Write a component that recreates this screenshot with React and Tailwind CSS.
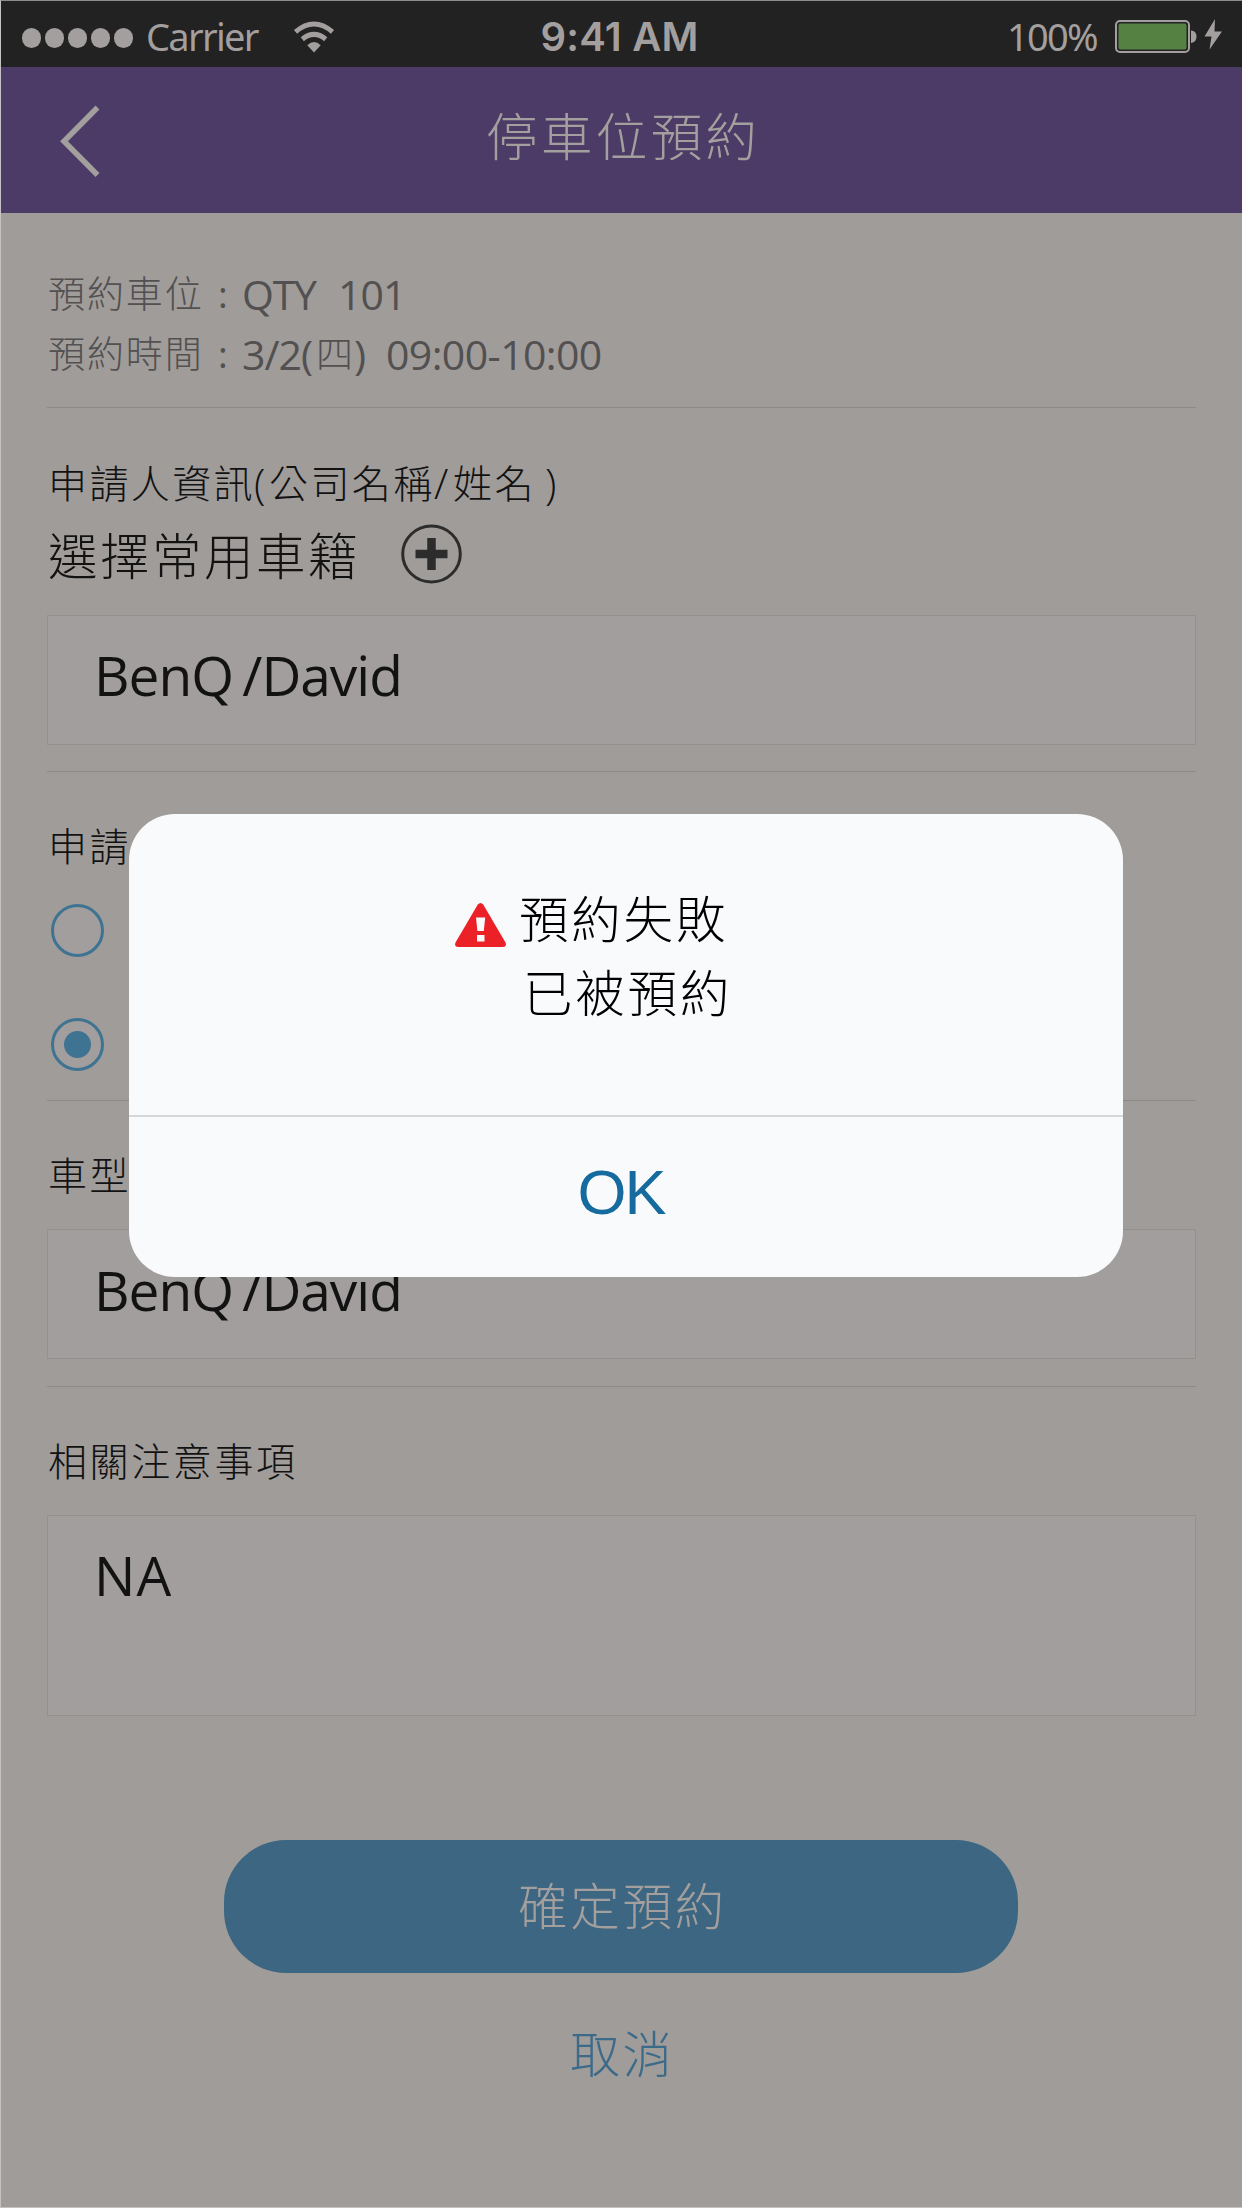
import React from "react";

const zh = "font-['Open_Sans','Noto_Sans_CJK_TC',sans-serif] font-light";

function StatusBar() {
  return (
    <div className="relative flex h-[66px] items-center bg-[#222222] text-[#a39f9e]">
      <div className="ml-[21px] mt-[7px] flex gap-[4px]">
        {[0, 1, 2, 3, 4].map((i) => (
          <span key={i} className="h-[20px] w-[19px] rounded-full bg-[#a39f9e]" />
        ))}
      </div>
      <span className="ml-[13px] mt-[3px] w-[112px] whitespace-nowrap font-['Noto_Sans',sans-serif] text-[38px] leading-[60px] tracking-[-1.700px]">Carrier</span>
      <svg className="ml-[35px] mt-[5px] h-[32px] w-[42px]" viewBox="0 0 42 32" fill="none" stroke="#a39f9e" strokeWidth="5">
        <path d="M2.5 10.8Q21 -4.8 39.5 10.8" />
        <path d="M9.3 18.2Q21 8.6 32.7 18.2" />
        <path d="M14.3 24.2Q21 18 27.7 24.2L21 31.5Z" fill="#a39f9e" stroke="none" />
      </svg>
      <div className="absolute inset-x-0 top-[6px] pr-[4px] text-center font-['Inter',sans-serif] text-[40px] font-semibold leading-[60px] tracking-[0.200px]">9:41 AM</div>
      <div className="ml-auto mr-[19px] flex items-center">
        <span className="mt-[3px] font-['Noto_Sans',sans-serif] text-[38px] leading-[60px] tracking-[-1.700px]">100%</span>
        <svg className="ml-[18px] mt-[4px] h-[36px] w-[108px]" viewBox="0 0 108 36">
          <rect x="1" y="3" width="73" height="31" rx="4" fill="none" stroke="#a39f9e" strokeWidth="2" />
          <rect x="3.500" y="5.500" width="68" height="26" rx="2" fill="#558242" />
          <path d="M76 12.500Q81.500 13 81.500 18.500Q81.500 24 76 25Z" fill="#a39f9e" />
          <path d="M100 1L89.500 18.500H96.500L94.500 31.500L107 13.500H99.500Z" fill="#a39f9e" />
        </svg>
      </div>
    </div>
  );
}

function Divider() {
  return <div className="h-px bg-[#8d8988]" />;
}

function Field({ children, className }) {
  return (
    <div className={"border border-[#94908f] bg-[#a29e9e] pl-[46px] pt-[19px] font-['Open_Sans',sans-serif] text-[55px] font-normal leading-[80px] text-[#121212] " + className}>
      {children}
    </div>
  );
}

function Radio({ checked }) {
  return (
    <div className="ml-[4px] flex h-[53px] w-[53px] items-center justify-center rounded-full border-[3px] border-[#3f7392] bg-[#a29e9e]">
      {checked && <span className="h-[27px] w-[27px] rounded-full bg-[#3f7392]" />}
    </div>
  );
}

function Modal() {
  return (
    <div className="absolute left-[128px] top-[813px] flex h-[463px] w-[994px] flex-col overflow-hidden rounded-[46px] bg-[#f9fafc]">
      <div className={"flex h-[301px] flex-col pt-[68px] text-[49.500px] leading-[74px] tracking-[2.800px] text-black " + zh}>
        <div className="flex h-[74px] items-center pl-[326px]">
          <svg className="mt-[12px] h-[44px] w-[51px]" viewBox="0 0 51 44">
            <path d="M22.800 1.500Q25.500 -1.500 28.200 1.500L50.500 39.500Q52 44 47.500 44H3.500Q-1 44 .5 39.500Z" fill="#ec2127" />
            <path d="M21 14.500H30.200L28.800 28H22.400ZM22 32H29.500V38.500H22Z" fill="#f9fafc" />
          </svg>
          <span className="ml-[13px]">預約失敗</span>
        </div>
        <div className="h-[74px] pl-[394px]">已被預約</div>
      </div>
      <div className="h-[2px] bg-[#d5d8d8]" />
      <button className="h-[150px] w-full pr-[10px] font-['Liberation_Sans',sans-serif] text-[63px] leading-[148px] tracking-[-2px] text-[#156a9e]">OK</button>
    </div>
  );
}

export default function App() {
  return (
    <div className="relative h-[2208px] w-[1242px] overflow-hidden border-b border-l border-t border-b-[#c5c2c1] border-l-[#c5c2c1] border-t-[#8f8d8c] bg-[#a09c9a]">
      <StatusBar />
      <header className="flex h-[146px] items-start bg-[#4c3b66]">
        <svg className="ml-[58px] mt-[38px] h-[72px] w-[42px]" viewBox="0 0 42 72" fill="none" stroke="#a39f9e" strokeWidth="5.500">
          <path d="M38.500 2.500L5 36.300L38.500 70" />
        </svg>
        <h1 className={"ml-[385px] mt-[29px] text-[51.500px] leading-[80px] tracking-[3.400px] text-[#a39f9e] " + zh}>停車位預約</h1>
      </header>
      <main className="ml-[46px] w-[1149px] text-[#121212]">
        <section className={"flex h-[194px] flex-col pt-[51px] text-[#525050] " + zh}>
          <div className="flex h-[60px] whitespace-pre text-[37px] leading-[60px]">
            <span className="w-[171px] pl-px tracking-[1.900px]">預約車位</span>
            <span className="w-[24px] font-normal">:</span>
            <span className="w-[96px] text-[41px] font-normal tracking-[-1.200px]">QTY</span>
            <span className="text-[41px] font-normal tracking-[-1px]">101</span>
          </div>
          <div className="flex h-[60px] whitespace-pre text-[37px] leading-[60px]">
            <span className="w-[171px] pl-px tracking-[1.900px]">預約時間</span>
            <span className="w-[24px] font-normal">:</span>
            <span className="w-[74px] text-[41px] font-normal tracking-[-1px]">3/2(</span>
            <span className="w-[38px]">四</span>
            <span className="w-[32px] text-[41px] font-normal">)</span>
            <span className="text-[41px] font-normal tracking-[-0.600px]">09:00-10:00</span>
          </div>
        </section>
        <Divider />
        <section className={"h-[363px] pt-[45px] " + zh}>
          <div className="flex h-[60px] whitespace-pre pl-px text-[39px] leading-[60px] tracking-[2.400px]">
            <span className="w-[206px]">申請人資訊</span>
            <span className="w-[15px] text-[42px]">(</span>
            <span className="w-[165px]">公司名稱</span>
            <span className="w-[19px] text-[42px]">/</span>
            <span className="w-[92px]">姓名</span>
            <span className="text-[42px]">)</span>
          </div>
          <div className="flex h-[102px] items-start">
            <span className="mt-[6px] w-[354px] pl-px text-[49.500px] leading-[74px] tracking-[2.500px]">選擇常用車籍</span>
            <svg className="mt-[11px] h-[60px] w-[61px]" viewBox="0 0 61 60" fill="none" stroke="#2c2c2c">
              <ellipse cx="30.500" cy="30" rx="28.800" ry="28" strokeWidth="3" />
              <path d="M14.500 30H46.500M30.500 14V46" strokeWidth="8.500" />
            </svg>
          </div>
          <Field className="h-[130px] w-[1149px] tracking-[-1px] [word-spacing:-4px]">BenQ /David</Field>
        </section>
        <Divider />
        <section className={"h-[328px] pt-[44px] " + zh}>
          <div className="h-[60px] pl-px text-[39px] leading-[60px] tracking-[2.400px]">申請人資訊</div>
          <div className="mt-[28px] flex flex-col gap-[61px]">
            <Radio />
            <Radio checked />
          </div>
        </section>
        <Divider />
        <section className={"h-[285px] pt-[44px] " + zh}>
          <div className="h-[84px] pl-px text-[39px] leading-[60px] tracking-[2.400px]">車型</div>
          <Field className="h-[130px] w-[1149px] pt-[20px] tracking-[-1px] [word-spacing:-4px]">BenQ /David</Field>
        </section>
        <Divider />
        <section className={"pt-[44px] " + zh}>
          <div className="h-[84px] pl-px text-[39px] leading-[60px] tracking-[2.600px]">相關注意事項</div>
          <Field className="h-[201px] w-[1149px] tracking-[1px]">NA</Field>
        </section>
      </main>
      <div className={"mt-[124px] flex flex-col items-center pr-px text-[49.500px] tracking-[2.800px] " + zh}>
        <button className="h-[133px] w-[794px] rounded-[62px] bg-[#3c6681] pl-[3px] text-[#a39f9e]">確定預約</button>
        <button className="mt-[44px] h-[74px] pl-[3px] leading-[74px] text-[#3c6a89]">取消</button>
      </div>
      <Modal />
    </div>
  );
}
